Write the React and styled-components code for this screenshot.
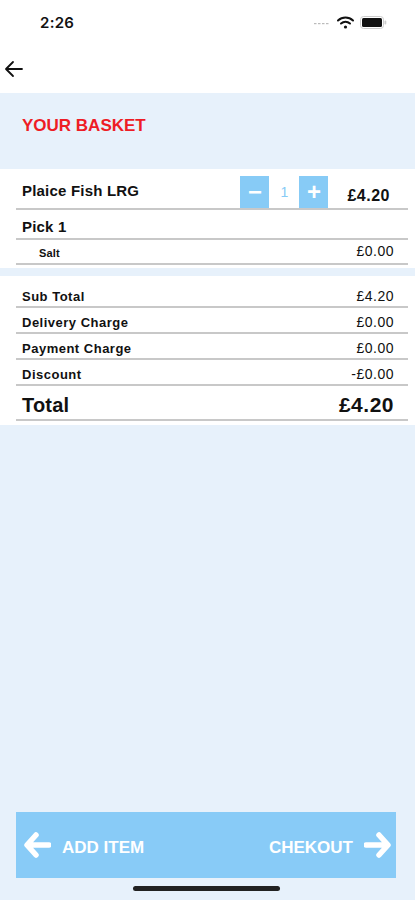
import styled, { createGlobalStyle } from 'styled-components';

const GlobalStyle = createGlobalStyle`
  html, body {
    margin: 0;
    padding: 0;
    background: #e7f1fb;
    font-family: "Liberation Sans", Arial, sans-serif;
  }
`;

const Screen = styled.div`
  width: 415px;
  height: 900px;
  display: flex;
  flex-direction: column;
  background: #e7f1fb;
  overflow: hidden;
`;

const StatusBar = styled.div`
  height: 45px;
  display: flex;
  align-items: center;
  justify-content: space-between;
  padding: 0 28px 0 40px;
  background: #fff;
  box-sizing: border-box;
`;

const Time = styled.span`
  font-size: 15px;
  font-weight: 600;
  color: #111;
  letter-spacing: 0.3px;
  font-family: "Inter", "Liberation Sans", sans-serif;
`;

const StatusIcons = styled.div`
  display: flex;
  align-items: center;
  gap: 6px;
`;

const NavBar = styled.div`
  height: 48px;
  display: flex;
  align-items: center;
  padding-left: 4px;
  background: #fff;
`;

const Header = styled.div`
  height: 76px;
  display: flex;
  align-items: center;
  padding: 0 0 10px 22px;
  box-sizing: border-box;
`;

const Title = styled.h1`
  margin: 0;
  font-size: 17px;
  font-weight: 700;
  color: #ee1c25;
`;

const Card = styled.div`
  background: #fff;
  padding: ${p => p.$pad};
  margin-bottom: ${p => p.$gap || '0'};
`;

const Row = styled.div`
  height: ${p => p.$h}px;
  display: flex;
  align-items: flex-end;
  justify-content: space-between;
  border-bottom: 2px solid #c8c8c8;
  padding: 0 14px ${p => p.$pb || 3}px 6px;
  box-sizing: border-box;
`;

const ItemRow = styled(Row)`
  align-items: center;
  padding: 3px 18px 0 6px;
`;

const Label = styled.span`
  font-size: ${p => p.$size}px;
  font-weight: 700;
  color: #111;
  letter-spacing: ${p => p.$ls || 0.2}px;
  padding-left: ${p => p.$indent || 0}px;
`;

const Price = styled.span`
  font-size: ${p => p.$size}px;
  font-weight: ${p => p.$weight || 400};
  letter-spacing: ${p => p.$ls || 0.5}px;
  color: #111;
`;

const ItemRight = styled.div`
  display: flex;
  align-items: center;
  align-self: flex-end;
`;

const ItemPrice = styled(Price)`
  margin-top: 7px;
`;

const Stepper = styled.div`
  display: flex;
  height: 32px;
  margin-right: 19px;
`;

const StepButton = styled.div`
  width: ${p => (p.$value ? 30 : 29)}px;
  display: flex;
  align-items: center;
  justify-content: center;
  background: ${p => (p.$value ? '#fff' : '#87cbf6')};
  color: ${p => (p.$value ? '#87cbf6' : '#fff')};
  font-size: ${p => (p.$value ? 14 : 24)}px;
  font-weight: ${p => (p.$value ? 400 : 700)};
`;

const Spacer = styled.div`
  flex: 1;
`;

const Footer = styled.div`
  padding: 0 19px 9px 16px;
  display: flex;
  flex-direction: column;
  align-items: center;
`;

const ActionBar = styled.div`
  width: 100%;
  height: 66px;
  background: #88cbf7;
  display: flex;
  align-items: center;
  justify-content: space-between;
  padding: 0 4px 0 7px;
  box-sizing: border-box;
`;

const Action = styled.div`
  display: flex;
  align-items: center;
  gap: 11px;
  color: #fff;
  font-size: 17px;
  font-weight: 700;
`;

const ActionText = styled.span`
  padding-top: 5px;
`;

const HomeIndicator = styled.div`
  width: 147px;
  height: 5px;
  border-radius: 3px;
  background: #222;
  margin-top: 8px;
`;

const totals = [
  ['Sub Total', '£4.20'],
  ['Delivery Charge', '£0.00'],
  ['Payment Charge', '£0.00'],
  ['Discount', '-£0.00'],
];

function ArrowIcon({ flip }) {
  return (
    <svg width="28" height="28" viewBox="0 0 28 28" style={flip ? { transform: 'scaleX(-1)' } : undefined}>
      <path d="M13 4 L4 14 L13 24 M5 14 H26" fill="none" stroke="#fff" strokeWidth="5.5" strokeLinecap="round" strokeLinejoin="round" />
    </svg>
  );
}

export default function App() {
  return (
    <Screen>
      <GlobalStyle />
      <StatusBar>
        <Time>2:26</Time>
        <StatusIcons>
          <svg width="18" height="6" viewBox="0 0 18 6">
            {[1, 5, 9, 13].map(x => <rect key={x} x={x} y="3" width="2.5" height="1.2" fill="#bbb" />)}
          </svg>
          <svg width="17" height="13" viewBox="0 0 17 13">
            <path d="M1 4.5 A11 11 0 0 1 16 4.5" fill="none" stroke="#111" strokeWidth="2" strokeLinecap="round" />
            <path d="M4 7.5 A7 7 0 0 1 13 7.5" fill="none" stroke="#111" strokeWidth="2" strokeLinecap="round" />
            <circle cx="8.5" cy="11" r="1.6" fill="#111" />
          </svg>
          <svg width="27" height="13" viewBox="0 0 27 13">
            <rect x="0.5" y="0.5" width="23" height="12" rx="3" fill="none" stroke="#ccc" />
            <rect x="2" y="2" width="20" height="9" rx="1.5" fill="#111" />
            <rect x="24.5" y="4.5" width="1.8" height="4" rx="0.9" fill="#ccc" />
          </svg>
        </StatusIcons>
      </StatusBar>
      <NavBar>
        <svg width="20" height="20" viewBox="0 0 20 20">
          <path d="M9 3 L2 10 L9 17 M2.5 10 H18" fill="none" stroke="#111" strokeWidth="1.8" strokeLinecap="round" strokeLinejoin="round" />
        </svg>
      </NavBar>
      <Header>
        <Title>YOUR BASKET</Title>
      </Header>
      <Card $pad="0 7px 3px 16px" $gap="8px">
        <ItemRow $h={41}>
          <Label $size={15}>Plaice Fish LRG</Label>
          <ItemRight>
            <Stepper>
              <StepButton>−</StepButton>
              <StepButton $value>1</StepButton>
              <StepButton>+</StepButton>
            </Stepper>
            <ItemPrice $size={16} $weight={700}>£4.20</ItemPrice>
          </ItemRight>
        </ItemRow>
        <Row $h={30} $pb={3}>
          <Label $size={15}>Pick 1</Label>
        </Row>
        <Row $h={25} $pb={4}>
          <Label $size={11} $indent={17}>Salt</Label>
          <Price $size={14}>£0.00</Price>
        </Row>
      </Card>
      <Card $pad="6px 7px 4px 16px">
        {totals.map(([name, value]) => (
          <Row key={name} $h={26} $pb={2}>
            <Label $size={13} $ls={0.5}>{name}</Label>
            <Price $size={14}>{value}</Price>
          </Row>
        ))}
        <Row $h={35} $pb={2}>
          <Label $size={20}>Total</Label>
          <Price $size={21} $weight={700}>£4.20</Price>
        </Row>
      </Card>
      <Spacer />
      <Footer>
        <ActionBar>
          <Action>
            <ArrowIcon />
            <ActionText>ADD ITEM</ActionText>
          </Action>
          <Action>
            <ActionText>CHEKOUT</ActionText>
            <ArrowIcon flip />
          </Action>
        </ActionBar>
        <HomeIndicator />
      </Footer>
    </Screen>
  );
}
